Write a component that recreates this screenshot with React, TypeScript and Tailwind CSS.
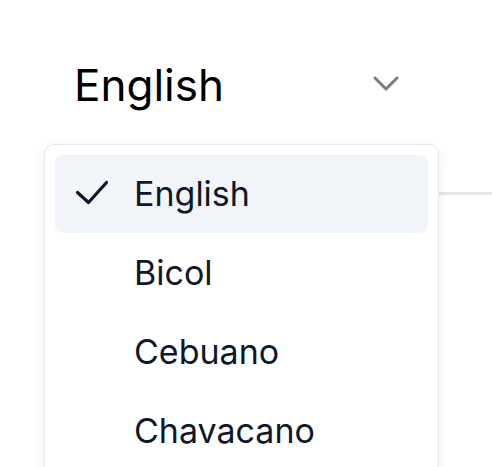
import { useState } from "react";

const languages = ["English", "Bicol", "Cebuano", "Chavacano"];

function ChevronDown() {
  return (
    <svg width="26" height="16" viewBox="0 0 26 16" fill="none" stroke="#7c7c7c" strokeWidth="3" strokeLinecap="round" strokeLinejoin="round">
      <path d="M2 3l11 11 11-11" />
    </svg>
  );
}

function Check() {
  return (
    <svg width="34" height="26" viewBox="0 0 34 26" fill="none" stroke="#0f172a" strokeWidth="3.2" strokeLinecap="round" strokeLinejoin="round">
      <path d="M2.5 12.5l11 10 18-20" />
    </svg>
  );
}

export default function App() {
  const [selected, setSelected] = useState("English");

  return (
    <div className="relative h-[467px] w-[492px] overflow-hidden bg-white font-['Inter',sans-serif]">
      {/* trigger */}
      <div className="flex items-start justify-between pl-[74px] pr-[93px] pt-[63px]">
        <span className="text-[44px] font-normal leading-none text-black">{selected}</span>
        <span className="mt-[12px]">
          <ChevronDown />
        </span>
      </div>

      {/* underline behind the menu */}
      <div className="ml-[300px] mt-[85px] h-[3px] bg-[#e5e7eb]" />

      {/* menu */}
      <div className="absolute left-[44px] top-[144px] w-[395px] rounded-[10px] border border-[#e2e8f0] bg-white p-[10px] shadow-[0_4px_12px_rgba(15,23,42,0.08)]">
        {languages.map((lang, i) => (
          <div
            key={lang}
            onClick={() => setSelected(lang)}
            className={`relative flex items-center rounded-[8px] pl-[79px] text-[34px] leading-none text-[#0f172a] ${
              i === 0 ? "h-[78px]" : "h-[79px]"
            } ${lang === selected ? "bg-[#f1f5f9]" : ""}`}
          >
            {lang === selected && (
              <span className="absolute left-[20px] top-[25px]">
                <Check />
              </span>
            )}
            {lang}
          </div>
        ))}
      </div>
    </div>
  );
}
